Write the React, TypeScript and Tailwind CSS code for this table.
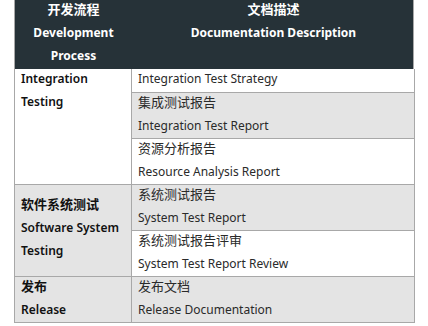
const font = "font-['Noto_Sans','Noto_Sans_CJK_SC',sans-serif]";

type DocRow = { zh?: string; en: string; shaded: boolean; h: string };

const docs: DocRow[] = [
  { en: "Integration Test Strategy", shaded: false, h: "h-[24px]" },
  { zh: "集成测试报告", en: "Integration Test Report", shaded: true, h: "h-[46px]" },
  { zh: "资源分析报告", en: "Resource Analysis Report", shaded: false, h: "h-[46px]" },
  { zh: "系统测试报告", en: "System Test Report", shaded: true, h: "h-[46px]" },
  { zh: "系统测试报告评审", en: "System Test Report Review", shaded: false, h: "h-[46px]" },
  { zh: "发布文档", en: "Release Documentation", shaded: true, h: "h-[46px]" },
];

const Line = ({ children, zh }: { children: React.ReactNode; zh?: boolean }) => (
  <div className={`leading-[23px] whitespace-nowrap ${zh ? "text-[13px]" : ""}`}>{children}</div>
);

const cell = "px-[6px] border-r border-b border-[#a8a8a8]";

export default function App() {
  return (
    <div className={`w-[428px] h-[326px] bg-white ${font}`}>
      <div className="ml-[14px] w-[400px]">
        {/* header */}
        <div className="grid grid-cols-[117px_283px] h-[69px] bg-[#263238] text-white font-bold text-[12px] border-x border-[#a8a8a8]">
          <div className="flex flex-col items-center -mt-[2px]">
            <Line zh>开发流程</Line>
            <Line>Development</Line>
            <Line>Process</Line>
          </div>
          <div className="flex flex-col items-center -mt-[2px]">
            <Line zh>文档描述</Line>
            <Line>Documentation Description</Line>
          </div>
        </div>

        {/* body */}
        <div className="grid grid-cols-[117px_283px] border-l border-[#a8a8a8] text-[12px]">
          <div className="flex flex-col font-semibold text-[#111]">
            <div className={`h-[116px] bg-white ${cell}`}>
              <div className="-mt-[2px]">
                <Line>Integration</Line>
                <Line>Testing</Line>
              </div>
            </div>
            <div className={`h-[92px] pt-[8px] bg-[#e4e4e4] ${cell}`}>
              <Line zh>软件系统测试</Line>
              <Line>Software System</Line>
              <Line>Testing</Line>
            </div>
            <div className={`h-[46px] bg-[#e4e4e4] ${cell}`}>
              <div className="-mt-[2px]">
                <Line zh>发布</Line>
                <Line>Release</Line>
              </div>
            </div>
          </div>
          <div className="flex flex-col text-[#2a2a2a]">
            {docs.map((d, i) => (
              <div key={i} className={`${d.h} ${cell} ${d.shaded ? "bg-[#e4e4e4]" : "bg-white"}`}>
                <div className="-mt-[2px]">
                  {d.zh && <Line zh>{d.zh}</Line>}
                  <Line>{d.en}</Line>
                </div>
              </div>
            ))}
          </div>
        </div>
      </div>
    </div>
  );
}
